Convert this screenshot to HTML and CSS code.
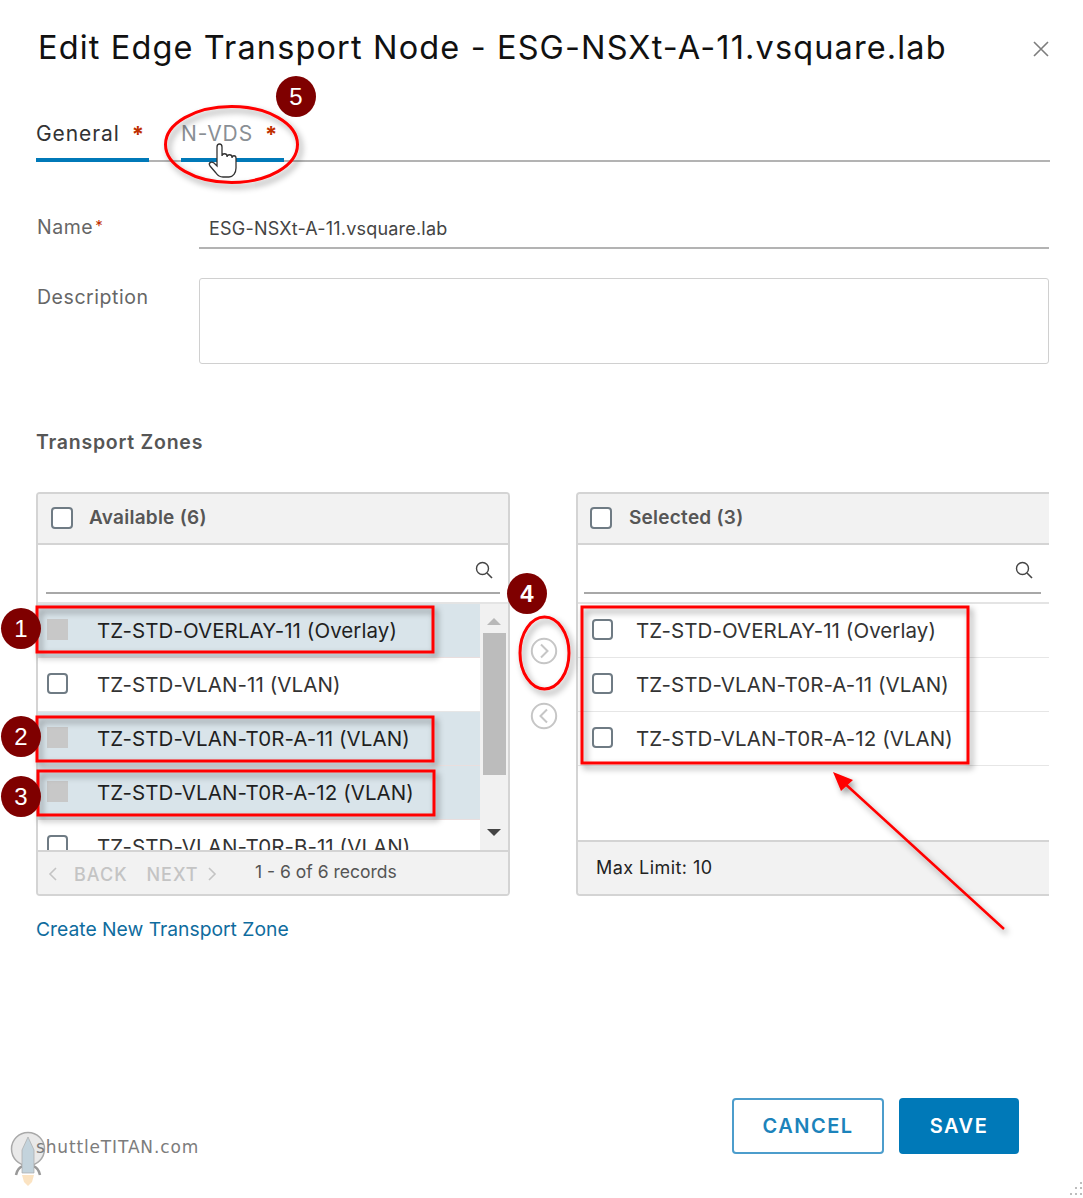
FILE: index.html
```html
<!DOCTYPE html>
<html lang="en">
<head>
<meta charset="utf-8">
<title>Edit Edge Transport Node</title>
<link rel="stylesheet" href="styles.css">
</head>
<body>
<div class="page">
  <header class="head">
    <h1 class="title">Edit Edge Transport Node - ESG-NSXt-A-11.vsquare.lab</h1>
    <svg class="close" width="18" height="18" viewBox="0 0 18 18"><path d="M2 2 16 16M16 2 2 16" stroke="#7d7d7d" stroke-width="1.6" fill="none"/></svg>
  </header>
  <nav class="tabs">
    <div class="tab tab-general"><span>General</span><b class="req">*</b></div>
    <div class="tab tab-nvds"><span>N-VDS</span><b class="req">*</b></div>
  </nav>
  <div class="form-row name-row">
    <label class="label">Name<b class="req-small">*</b></label>
    <div class="input">ESG-NSXt-A-11.vsquare.lab</div>
  </div>
  <div class="form-row desc-row">
    <label class="label">Description</label>
    <div class="textarea"></div>
  </div>
  <h2 class="section">Transport Zones</h2>
  <div class="zones">
    <section class="panel panel-left">
      <div class="panel-head"><i class="check"></i><span>Available (6)</span></div>
      <div class="search"><div class="search-line">
        <svg width="20" height="20" viewBox="0 0 20 20"><circle cx="8.5" cy="8.5" r="6" stroke="#444" stroke-width="1.4" fill="none"/><path d="M13 13 18 18" stroke="#444" stroke-width="1.6"/></svg>
      </div></div>
      <div class="list-wrap">
        <div class="list">
          <div class="row sel"><i class="check off"></i><span>TZ-STD-OVERLAY-11 (Overlay)</span></div>
          <div class="row"><i class="check"></i><span>TZ-STD-VLAN-11 (VLAN)</span></div>
          <div class="row sel"><i class="check off"></i><span>TZ-STD-VLAN-T0R-A-11 (VLAN)</span></div>
          <div class="row sel"><i class="check off"></i><span>TZ-STD-VLAN-T0R-A-12 (VLAN)</span></div>
          <div class="row"><i class="check"></i><span>TZ-STD-VLAN-T0R-B-11 (VLAN)</span></div>
        </div>
        <div class="scrollbar">
          <i class="tri up"></i>
          <div class="thumb"></div>
          <i class="tri down"></i>
        </div>
      </div>
      <div class="panel-foot">
        <div class="pager">
          <svg width="10" height="14" viewBox="0 0 10 14"><path d="M8 1 2 7l6 6" stroke="#c4c4c4" stroke-width="1.6" fill="none"/></svg>
          <span class="pg back">BACK</span>
          <span class="pg next">NEXT</span>
          <svg width="10" height="14" viewBox="0 0 10 14"><path d="M2 1l6 6-6 6" stroke="#c4c4c4" stroke-width="1.6" fill="none"/></svg>
        </div>
        <span class="records">1 - 6 of 6 records</span>
      </div>
    </section>
    <div class="movers">
      <svg class="mover" width="28" height="28" viewBox="0 0 28 28"><circle cx="14" cy="14" r="12.2" stroke="#c6c6c6" stroke-width="2" fill="none"/><path d="M11 7.5 17.5 14 11 20.5" stroke="#c6c6c6" stroke-width="2" fill="none"/></svg>
      <svg class="mover" width="28" height="28" viewBox="0 0 28 28"><circle cx="14" cy="14" r="12.2" stroke="#c6c6c6" stroke-width="2" fill="none"/><path d="M17 7.5 10.500 14 17 20.5" stroke="#c6c6c6" stroke-width="2" fill="none"/></svg>
    </div>
    <section class="panel panel-right">
      <div class="panel-head"><i class="check"></i><span>Selected (3)</span></div>
      <div class="search"><div class="search-line">
        <svg width="20" height="20" viewBox="0 0 20 20"><circle cx="8.5" cy="8.5" r="6" stroke="#444" stroke-width="1.4" fill="none"/><path d="M13 13 18 18" stroke="#444" stroke-width="1.6"/></svg>
      </div></div>
      <div class="list-wrap">
        <div class="list">
          <div class="row"><i class="check"></i><span>TZ-STD-OVERLAY-11 (Overlay)</span></div>
          <div class="row"><i class="check"></i><span>TZ-STD-VLAN-T0R-A-11 (VLAN)</span></div>
          <div class="row"><i class="check"></i><span>TZ-STD-VLAN-T0R-A-12 (VLAN)</span></div>
        </div>
      </div>
      <div class="panel-foot"><span class="limit">Max Limit: 10</span></div>
    </section>
  </div>
  <a class="create" href="#">Create New Transport Zone</a>
  <div class="actions">
    <button class="btn cancel">CANCEL</button>
    <button class="btn save">SAVE</button>
  </div>
</div>

<svg class="overlay" width="1083" height="1198" viewBox="0 0 1083 1198">
  <defs>
    <filter id="sh" x="-20%" y="-20%" width="140%" height="140%"><feDropShadow dx="3" dy="4" stdDeviation="3" flood-color="#000" flood-opacity=".4"/></filter>
  </defs>
  <g fill="none" stroke="#f00" stroke-width="3" filter="url(#sh)">
    <ellipse cx="231.500" cy="144.500" rx="66" ry="38"/>
    <ellipse cx="544.500" cy="653" rx="24.500" ry="36"/>
    <rect x="37" y="607" width="396" height="45"/>
    <rect x="37" y="717" width="396" height="44"/>
    <rect x="38" y="771" width="396" height="44"/>
    <rect x="582" y="607" width="386" height="156"/>
  </g>
  <g filter="url(#sh)">
    <path d="M1004 929 842 781" stroke="#f00" stroke-width="2.500" fill="none"/>
    <path d="M833 772 853 780 841 791Z" fill="#f00"/>
  </g>
  <path d="M217 147c0-4 5-4 5 0v9c0-3 5-3 5 0v1c0-3 5-3 5 0v1c0-3 4-3 4 0v10c0 5-3 9-7 9h-6c-3 0-5-1-7-4l-6-7c-2-3 1-5 4-3l3 3z" fill="#fff" stroke="#333" stroke-width="1.300"/>
  <g class="logo">
    <circle cx="28" cy="1149" r="16.500" fill="#e9e9e9" stroke="#a9a9a9" stroke-width="1.500"/>
    <path d="M16 1175c1-5 4-8 7-9M40 1175c-1-5-4-8-7-9" stroke="#999" stroke-width="2.500" fill="none"/>
    <path d="M28 1137l-6 13v23h12v-23z" fill="#c3d3dc" stroke="#aaa" stroke-width=".7"/>
    <path d="M22 1175h12l-2 7-4 4-4-4z" fill="#fbe3c2"/>
  </g>
  <g class="dots" fill="#bdbdbd">
    <rect x="1080" y="1182" width="2" height="2"/>
    <rect x="1075" y="1187" width="2" height="2"/><rect x="1080" y="1187" width="2" height="2"/>
    <rect x="1070" y="1193" width="2" height="2"/><rect x="1075" y="1193" width="2" height="2"/><rect x="1080" y="1193" width="2" height="2"/>
  </g>
</svg>
<span class="logo-text">shuttleTITAN.com</span>
<span class="badge b1">1</span>
<span class="badge b2">2</span>
<span class="badge b3">3</span>
<span class="badge b4">4</span>
<span class="badge b5">5</span>
</body>
</html>
```
FILE: styles.css
```css
* { box-sizing: border-box; }
html, body { margin: 0; padding: 0; background: #fff; }
body { width: 1083px; height: 1198px; overflow: hidden; position: relative; font-family: Inter, "Liberation Sans", sans-serif; color: #3a3a3a; }
.page { width: 1083px; height: 1198px; padding: 0 33px 0 36px; display: flex; flex-direction: column; }

.head { height: 100px; display: flex; justify-content: space-between; padding: 28px 0 0 2px; }
.title { margin: 0; font-size: 32.500px; line-height: 40px; font-weight: 400; color: #111; white-space: nowrap; letter-spacing: 1.130px; }
.close { margin: 12px 0 0; }

.tabs { height: 62px; border-bottom: 2px solid #b3b3b3; display: flex; flex: none; }
.tab { height: 62px; border-bottom: 4px solid #0079b8; padding-top: 20px; font-size: 21px; line-height: 28px; display: flex; letter-spacing: .9px; }
.tab-general { width: 113px; color: #333; }
.tab-nvds { width: 103px; margin-left: 32px; color: #8a8f95; }
.req { color: #c03000; margin-left: 12px; font-weight: 700; font-size: 22px; line-height: 28px; }

.form-row { display: flex; }
.label { width: 163px; flex: none; font-size: 19.500px; line-height: 24px; color: #666; padding-left: 1px; letter-spacing: .55px; }
.req-small { color: #c03000; font-size: 15px; font-weight: 400; vertical-align: 3px; margin-left: 2px; }
.name-row { margin-top: 52px; height: 35px; }
.input { width: 850px; height: 35px; border-bottom: 2px solid #b3b3b3; font-size: 18px; line-height: 24px; color: #444; padding: 3px 0 0 10px; letter-spacing: .2px; }
.desc-row { margin-top: 29px; height: 86px; }
.desc-row .label { padding-top: 7px; }
.textarea { width: 850px; height: 86px; border: 1.500px solid #d0d0d0; border-radius: 3px; }

.section { margin: 65px 0 0; font-size: 19.500px; line-height: 26px; font-weight: 600; color: #565656; letter-spacing: .75px; }

.zones { margin-top: 37px; display: flex; height: 404px; flex: none; }
.panel { width: 474px; height: 404px; flex: none; border: 2px solid #d4d4d4; border-radius: 4px; display: flex; flex-direction: column; overflow: hidden; }
.panel-right { width: 473px; border-right: 0; border-top-right-radius: 0; border-bottom-right-radius: 0; }
.panel-head { height: 51px; flex: none; background: #f2f2f2; border-bottom: 2px solid #d4d4d4; display: flex; align-items: center; font-size: 19px; font-weight: 600; color: #565656; padding: 0 0 2px 13px; letter-spacing: .25px; }
.panel-head span { margin-left: 16px; }
.panel-right .panel-head { padding-left: 12px; }
.panel-right .panel-head span { margin-left: 17px; }
.panel-head .check { width: 22px; height: 22px; }
.check { display: block; width: 21px; height: 21px; flex: none; border: 2px solid #6f7b84; border-radius: 4px; background: #fff; }
.check.off { background: #c8c8c8; border: 0; border-radius: 0; }
.search { height: 59px; flex: none; border-bottom: 2px solid #e4e4e4; padding: 0 8px; }
.panel-right .search { padding: 0 8px 0 6px; }
.search-line { height: 49px; border-bottom: 2px solid #a8a8a8; display: flex; justify-content: flex-end; align-items: flex-start; padding: 15px 6px 0 0; }
.panel-right .search-line { padding-right: 7px; }
.list-wrap { height: 246px; flex: none; display: flex; overflow: hidden; }
.panel-right .list-wrap { height: 236px; }
.list { flex: 1; min-width: 0; }
.row { height: 54px; display: flex; align-items: center; padding-left: 9px; border-bottom: 1.500px solid #e6e6e6; font-size: 20.500px; color: #333; white-space: nowrap; letter-spacing: .08px; }
.row span { margin-left: 29px; }
.row .check { position: relative; top: -1px; }
.row.sel { background: #d9e4ea; color: #1f1f1f; border-bottom-color: #e9dede; }
.panel-right .row { padding-left: 14px; }
.panel-right .row span { margin-left: 23px; }
.scrollbar { width: 28px; flex: none; background: #f1f1f1; display: flex; flex-direction: column; align-items: center; padding: 14px 0 0; position: relative; }
.thumb { width: 23px; height: 142px; background: #bcbcbc; margin-top: 8px; }
.tri { display: block; width: 0; height: 0; border-left: 7px solid transparent; border-right: 7px solid transparent; }
.tri.up { border-bottom: 7px solid #b8b8b8; }
.tri.down { border-top: 7px solid #444; margin-top: 54px; }
.panel-foot { flex: 1; background: #f2f2f2; border-top: 2px solid #d4d4d4; display: flex; align-items: center; font-size: 18px; }
.pager { display: flex; align-items: center; margin-left: 10px; width: 207px; position: relative; top: 1px; }
.pg { color: #c4c4c4; font-weight: 500; letter-spacing: 1px; }
.back { margin-left: 16px; }
.next { margin-left: 19px; margin-right: 8px; }
.records { color: #555; position: relative; top: -2px; font-size: 17.500px; }
.limit { margin-left: 18px; color: #222; letter-spacing: .45px; position: relative; top: -1px; }

.movers { width: 66px; flex: none; display: flex; flex-direction: column; align-items: center; gap: 37px; padding: 145px 0 0 2px; }
.create { margin: 20px 0 0; font-size: 19.300px; line-height: 26px; color: #0f6c9e; text-decoration: none; }

.actions { margin-top: 156px; display: flex; gap: 15px; padding-left: 696px; }
.btn { height: 56px; border-radius: 4px; font-family: inherit; font-size: 20px; font-weight: 600; letter-spacing: 1.500px; padding: 0; }
.cancel { width: 152px; background: #fff; border: 2px solid #4c9dcc; color: #1c83bb; }
.save { width: 120px; background: #0079b8; border: 2px solid #0079b8; color: #fff; }

.overlay { position: absolute; left: 0; top: 0; pointer-events: none; }
.badge { position: absolute; width: 40px; height: 41px; border-radius: 50%; background: #7f0000; color: #fff; font-family: "Liberation Sans", sans-serif; font-size: 24px; line-height: 41px; text-align: center; }
.b1 { left: 1px; top: 608px; }
.b2 { left: 1px; top: 716px; }
.b3 { left: 1px; top: 776px; }
.b4 { left: 507px; top: 573px; font-weight: 700; }
.b5 { left: 276px; top: 76px; }
.logo-text { position: absolute; left: 36px; top: 1137px; font-family: "DejaVu Sans", sans-serif; font-size: 17px; line-height: 20px; color: #7c7c7c; letter-spacing: .85px; }
```
